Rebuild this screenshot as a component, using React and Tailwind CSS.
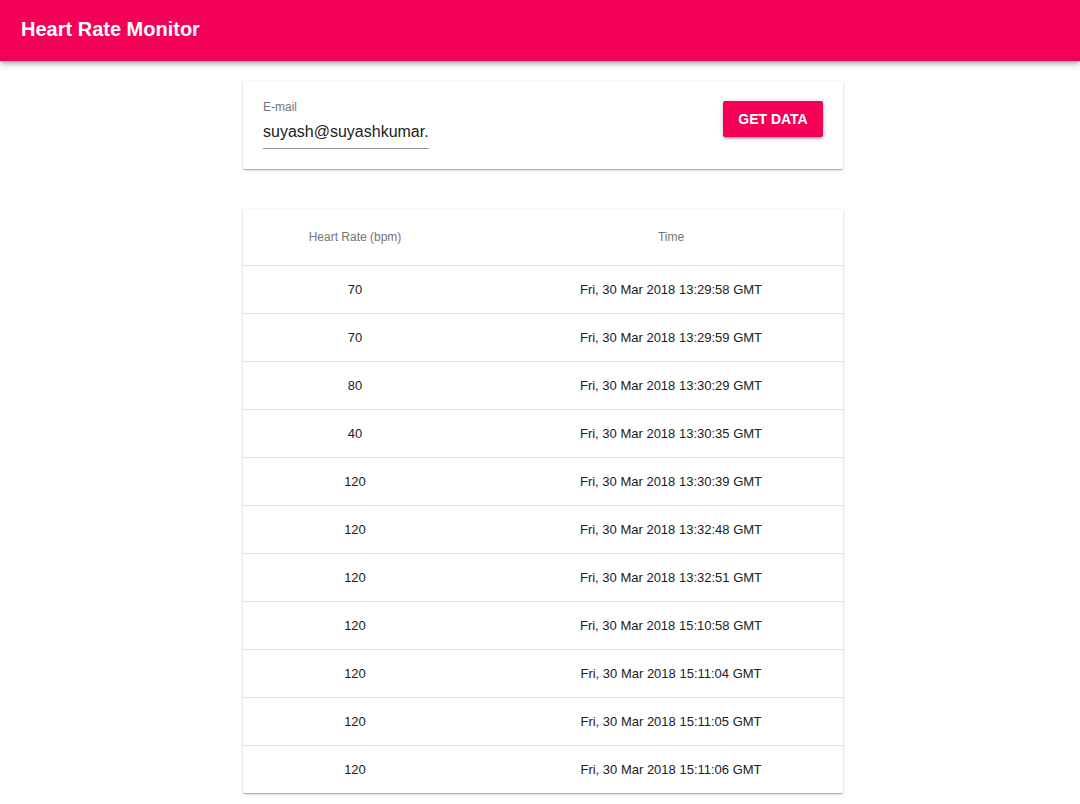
import React from 'react';

const rows = [
  ['70', 'Fri, 30 Mar 2018 13:29:58 GMT'],
  ['70', 'Fri, 30 Mar 2018 13:29:59 GMT'],
  ['80', 'Fri, 30 Mar 2018 13:30:29 GMT'],
  ['40', 'Fri, 30 Mar 2018 13:30:35 GMT'],
  ['120', 'Fri, 30 Mar 2018 13:30:39 GMT'],
  ['120', 'Fri, 30 Mar 2018 13:32:48 GMT'],
  ['120', 'Fri, 30 Mar 2018 13:32:51 GMT'],
  ['120', 'Fri, 30 Mar 2018 15:10:58 GMT'],
  ['120', 'Fri, 30 Mar 2018 15:11:04 GMT'],
  ['120', 'Fri, 30 Mar 2018 15:11:05 GMT'],
  ['120', 'Fri, 30 Mar 2018 15:11:06 GMT'],
];

const App = () => {
  return (
    <div className="min-h-screen bg-white font-['Liberation_Sans',Arial,sans-serif]">
      <header className="h-[61px] bg-[#f50057] flex items-center px-[21px] shadow-[0_2px_4px_-1px_rgba(0,0,0,0.2),0_4px_5px_0_rgba(0,0,0,0.14),0_1px_10px_0_rgba(0,0,0,0.12)]">
        <h1 className="text-white text-[20px] font-bold -mt-[4px]">Heart Rate Monitor</h1>
      </header>

      <main className="w-[606px] mx-auto pl-[6px] pt-[20px]">
        {/* email form */}
        <div className="bg-white rounded-[2px] shadow-[0_1px_3px_0_rgba(0,0,0,0.2),0_1px_1px_0_rgba(0,0,0,0.14),0_2px_1px_-1px_rgba(0,0,0,0.12)] p-[20px] flex justify-between items-start">
          <div className="w-[166px] h-[48px] flex flex-col border-b border-[#949494]">
            <label className="text-[12px] text-[#757575] -mt-[1px] leading-[14px]">E-mail</label>
            <div className="text-[16px] text-[#222] mt-[8px] leading-[20px] overflow-hidden whitespace-nowrap">suyash@suyashkumar.com</div>
          </div>
          <button className="w-[100px] h-[36px] bg-[#f50057] text-white text-[14px] font-bold rounded-[2px] shadow-[0_1px_5px_0_rgba(0,0,0,0.2),0_2px_2px_0_rgba(0,0,0,0.14),0_3px_1px_-2px_rgba(0,0,0,0.12)]">
            GET DATA
          </button>
        </div>

        {/* data table */}
        <div className="mt-[40px] bg-white rounded-[2px] shadow-[0_1px_3px_0_rgba(0,0,0,0.2),0_1px_1px_0_rgba(0,0,0,0.14),0_2px_1px_-1px_rgba(0,0,0,0.12)]">
          <table className="w-full border-collapse">
            <thead>
              <tr className="h-[56px] border-b border-[#e0e0e0]">
                <th className="w-[256px] pl-[24px] pr-[56px] text-center text-[12px] font-normal text-[#757575]">Heart Rate (bpm)</th>
                <th className="px-[24px] text-center text-[12px] font-normal text-[#757575]">Time</th>
              </tr>
            </thead>
            <tbody>
              {rows.map(([bpm, time], i) => (
                <tr key={i} className={i < rows.length - 1 ? 'h-[48px] border-b border-[#e0e0e0]' : 'h-[48px]'}>
                  <td className="pl-[24px] pr-[56px] pt-[1px] text-center text-[13px] text-[#212121]">{bpm}</td>
                  <td className="px-[24px] pt-[1px] text-center text-[13px] text-[#212121]">{time}</td>
                </tr>
              ))}
            </tbody>
          </table>
        </div>
      </main>
    </div>
  );
};

export default App;
